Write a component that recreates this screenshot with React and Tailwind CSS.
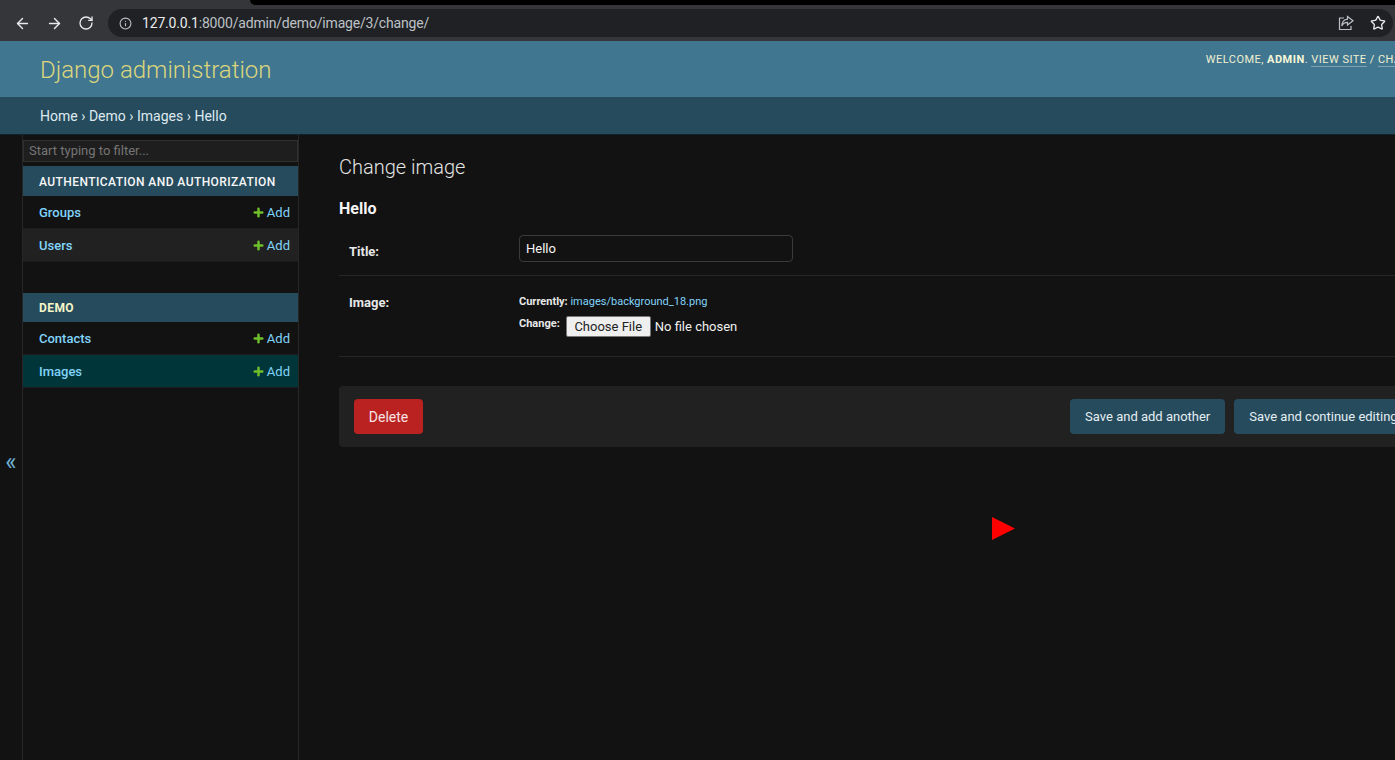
import { ArrowLeft, ArrowRight, RotateCw, Info, Star, Plus } from 'lucide-react';

function SidebarRow({ name, active, shaded }) {
  const bg = active ? 'bg-[#00363a]' : shaded ? 'bg-[#212121]' : 'bg-[#121212]';
  return (
    <div className={`h-[33px] flex items-center justify-between pl-4 pr-[8px] pt-[1px] border-b border-[#1c1c1c] ${bg}`}>
      <a className="text-[13px] font-medium text-[#81d4fa]">{name}</a>
      <a className="flex items-center gap-[2px] text-[13px] text-[#81d4fa]">
        <Plus size={13} strokeWidth={4.5} className="text-[#70bf2b]" />
        Add
      </a>
    </div>
  );
}

function SidebarGroup({ caption, rows, bright }) {
  return (
    <div>
      <div className={`flex items-center pl-4 pt-[1px] bg-[#264b5d] text-xs tracking-[0.43px] ${bright ? 'h-[29px] font-bold text-[#f5f5c8]' : 'h-[30px] font-medium text-[#f7f7f7]'}`}>
        {caption}
      </div>
      {rows.map((r) => (
        <SidebarRow key={r.name} {...r} />
      ))}
    </div>
  );
}

function BrowserBar() {
  return (
    <div className="h-[41px] bg-[#35363a] relative flex items-center">
      <div className="absolute top-0 right-0 left-[250px] h-[5px] bg-black rounded-bl-md" />
      <div className="flex items-center w-[108px] pl-[14px] gap-[15px] text-[#e8eaed] mt-[5px]">
        <ArrowLeft size={17} strokeWidth={2} />
        <ArrowRight size={17} strokeWidth={2} />
        <RotateCw size={16} strokeWidth={2} />
      </div>
      <div className="flex-1 mr-[2px] mt-[5px] h-[28px] rounded-full bg-[#202124] flex items-center pl-[11px] pr-[7px]">
        <Info size={13} className="text-[#bdc1c6]" />
        <span className="ml-[10px] text-[14px] tracking-[-0.18px] text-[#bdc1c6]">
          <span className="text-[#e8eaed]">127.0.0.1</span>:8000/admin/demo/image/3/change/
        </span>
        <svg width="18" height="18" viewBox="0 0 18 18" fill="none" stroke="#bdc1c6" strokeWidth="1.2" className="ml-auto mr-[15px]">
          <path d="M7 4H2.5v11.5h11.5V12" />
          <path d="M10.5 2.5 16 6.8l-5.5 4.2V8.4C8 8.4 6 9.500 4.800 12 5 8.500 7 5.500 10.500 5.100z" />
        </svg>
        <Star size={16} strokeWidth={2} className="text-[#e8eaed]" />
      </div>
    </div>
  );
}

export default function App() {
  return (
    <div className="w-[1395px] h-[760px] overflow-hidden relative bg-[#121212] font-['Roboto',sans-serif]">
      <BrowserBar />
      <div className="w-[1585px] flex flex-col h-[719px]">
        <div className="h-[56px] shrink-0 bg-[#417690] flex justify-between pl-10 pr-[36px]">
          <h1 className="text-2xl font-light text-[#dcd67c] mt-[11px] leading-[36px]">Django administration</h1>
          <div className="text-[11px] tracking-[0.48px] text-[#f0f0d0] mt-[12px] leading-[14px]">
            WELCOME, <strong className="font-bold text-[#f8f8d8]">ADMIN</strong>.{' '}
            <a className="border-b border-[#7fa3b5]">VIEW SITE</a> /{' '}
            <a className="border-b border-[#7fa3b5]">CHANGE PASSWORD</a> /{' '}
            <a className="border-b border-[#7fa3b5]">LOG OUT</a>
          </div>
        </div>
        <div className="h-[38px] shrink-0 bg-[#264b5d] flex items-center pl-10 text-sm text-[#dfeaf0] border-b border-[#10222b]">
          Home <span className="mx-[3.5px]">›</span> Demo <span className="mx-[3.5px]">›</span> Images <span className="mx-[3.5px]">›</span> Hello
        </div>
        <div className="flex flex-1">
          <div className="w-[23px] shrink-0 border-r border-[#262626] flex items-center justify-center pt-[30px]">
            <span className="text-[24px] leading-none text-[#6fb3d6] -mt-[2px]">«</span>
          </div>
          <div className="w-[276px] shrink-0 border-r border-[#262626] pt-[5px]">
            <input
              readOnly
              placeholder="Start typing to filter..."
              className="block w-full h-[22px] px-[5px] pb-[2px] text-[13px] bg-[#1e1e1e] border border-[#303030] placeholder:text-[#757575] outline-none"
            />
            <div className="mt-[4px]">
              <SidebarGroup
                caption="AUTHENTICATION AND AUTHORIZATION"
                rows={[{ name: 'Groups' }, { name: 'Users', shaded: true }]}
              />
            </div>
            <div className="mt-[31px]">
              <SidebarGroup
                caption="DEMO"
                bright
                rows={[{ name: 'Contacts' }, { name: 'Images', active: true }]}
              />
            </div>
          </div>
          <div className="flex-1 pl-10 pr-[87px] pt-[19px]">
            <h1 className="text-xl font-light text-[#e4e4e4] leading-[26px]">Change image</h1>
            <h2 className="mt-[19px] text-base font-bold text-[#f5f5f5] leading-[20px]">Hello</h2>
            <div className="mt-[16px] h-[41px] flex items-start pl-[10px] border-b border-[#262626]">
              <label className="w-[170px] mt-[7px] text-[13px] font-bold text-[#e8e8e8]">Title:</label>
              <input
                readOnly
                value="Hello"
                className="w-[274px] h-[27px] px-[6px] text-[13px] text-[#f5f5f5] bg-[#121212] border border-[#3a3a3a] rounded outline-none"
              />
            </div>
            <div className="h-[81px] flex items-start pl-[10px] border-b border-[#262626]">
              <label className="w-[170px] mt-[17px] text-[13px] font-bold text-[#e8e8e8]">Image:</label>
              <div className="mt-[19px] text-[11px] text-[#e8e8e8]">
                <p className="leading-[14px]">
                  <b>Currently:</b> <a className="text-[#81d4fa]">images/background_18.png</a>
                </p>
                <div className="mt-[7px] flex items-start">
                  <b className="mt-[1px] leading-[14px] mr-[6px]">Change:</b>
                  <input
                    type="file"
                    className="text-[13px] text-[#f0f0f0] w-[200px] file:h-[21px] file:w-[85px] file:mr-1 file:bg-[#efefef] file:text-[#222] file:border file:border-[#767676] file:rounded-[2px]"
                  />
                </div>
              </div>
            </div>
            <div className="mt-[29px] h-[61px] bg-[#212121] rounded flex items-center px-[15px]">
              <a className="h-[35px] w-[69px] flex items-center justify-center rounded bg-[#ba2121] text-sm text-[#f7e4e4]">Delete</a>
              <div className="ml-auto flex gap-[9px]">
                {['Save and add another', 'Save and continue editing', 'SAVE'].map((t) => (
                  <button key={t} className="h-[35px] px-[15px] rounded bg-[#264b5d] text-[13px] text-[#e4eef2]">{t}</button>
                ))}
              </div>
            </div>
          </div>
        </div>
      </div>
      <svg width="23" height="23" viewBox="0 0 23 23" className="absolute left-[992px] top-[517px]">
        <polygon points="0,0 23,11.500 0,23" fill="#ff0000" />
      </svg>
    </div>
  );
}
